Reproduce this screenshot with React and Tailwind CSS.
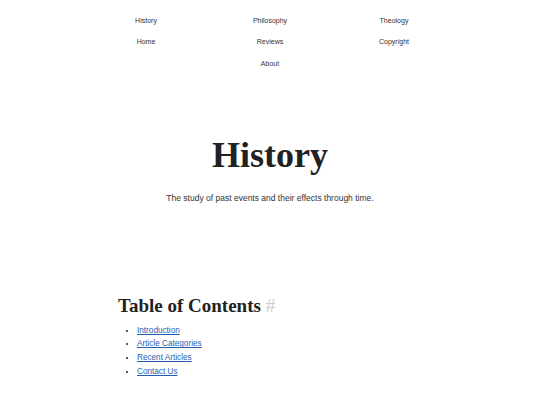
export default function App() {
  const nav = ["History", "Philosophy", "Theology", "Home", "Reviews", "Copyright", "About"];
  const toc = ["Introduction", "Article Categories", "Recent Articles", "Contact Us"];
  return (
    <div className="min-h-[405px] bg-white text-[#222] font-['Liberation_Sans',Arial,sans-serif]">
      <nav className="mx-auto w-[372px] pt-[10px] flex flex-wrap justify-center">
        {nav.map((n) => (
          <a key={n} href="#" className="w-[124px] h-[21.7px] flex items-center justify-center text-[7px] text-[#333]">
            {n}
          </a>
        ))}
      </nav>
      <header className="text-center pt-[58px]">
        <h1 className="font-['Liberation_Serif',serif] font-bold text-[36px] leading-[44px]">History</h1>
        <p className="mt-[15px] text-[8.5px] text-[#333]">The study of past events and their effects through time.</p>
      </header>
      <section className="mx-auto w-[304px] pt-[89px]">
        <h2 className="font-['Liberation_Serif',serif] font-bold text-[19px] leading-[24px]">
          Table of Contents <span className="text-[#ccc] font-normal">#</span>
        </h2>
        <ul className="mt-[6px] pl-[19px] list-disc text-[8.2px]">
          {toc.map((t) => (
            <li key={t} className="leading-[13.6px]">
              <a href="#" className="text-[#1f5fb0] underline">{t}</a>
            </li>
          ))}
        </ul>
      </section>
    </div>
  );
}
